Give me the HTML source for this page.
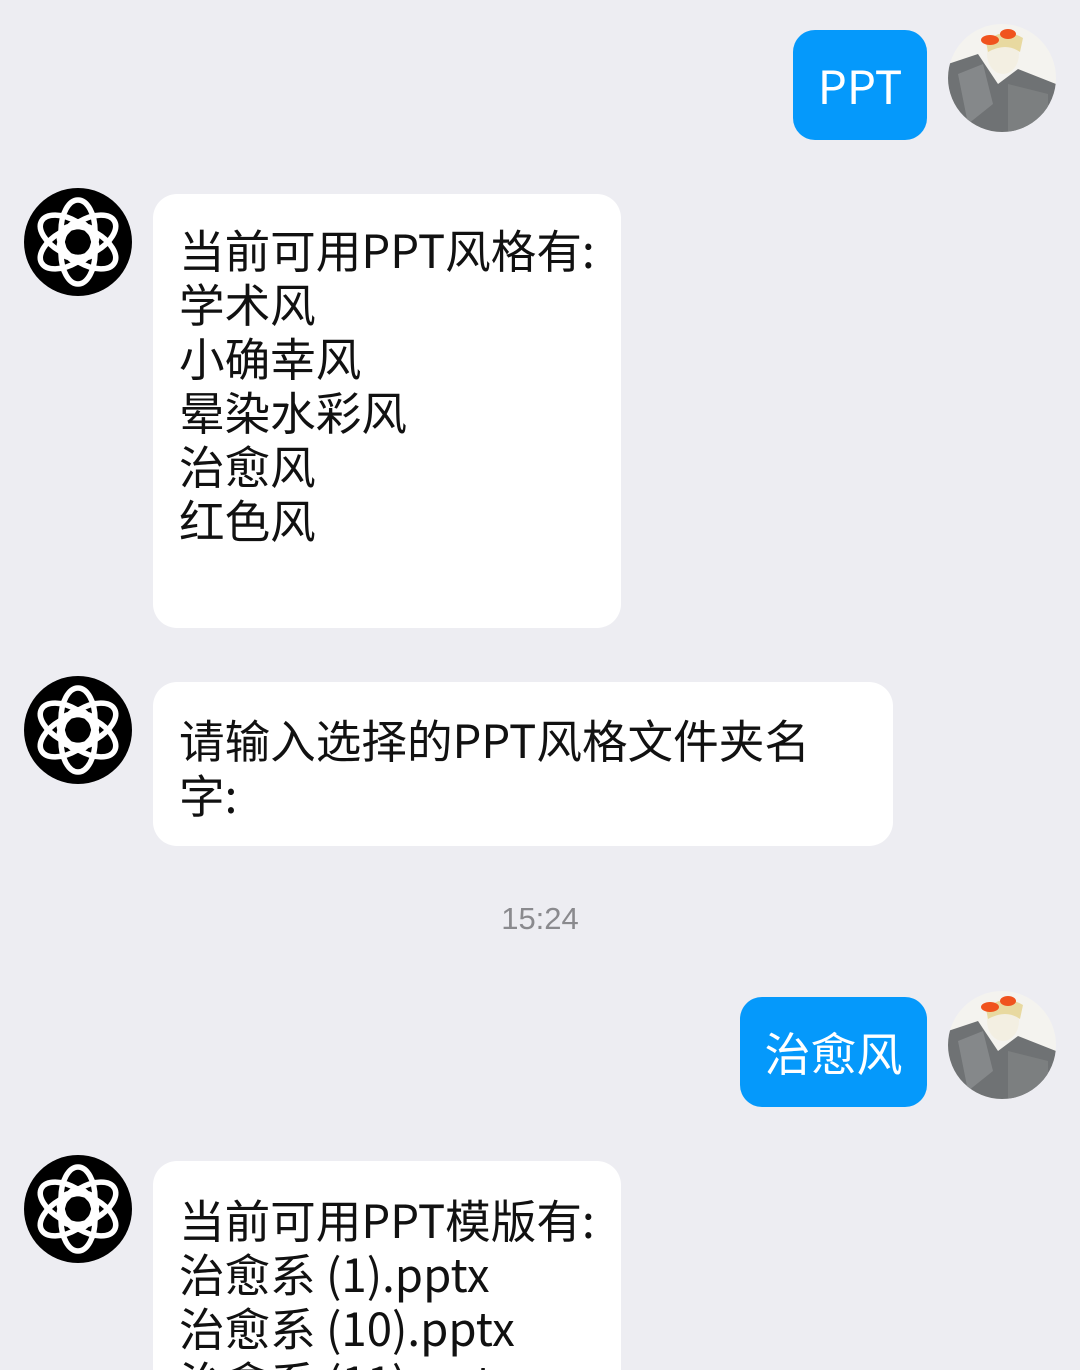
<!DOCTYPE html>
<html><head><meta charset="utf-8">
<style>
html,body{margin:0;padding:0;width:1080px;height:1370px;overflow:hidden;background:#ededf2;}
body{position:relative;font-family:"Liberation Sans","Noto Sans CJK SC",sans-serif;}
.b{position:absolute;background:#fff;border-radius:24px;box-sizing:border-box;color:#111;font-size:45.6px;line-height:54px;padding-left:26px;white-space:nowrap;font-family:"Noto Sans CJK SC","Liberation Sans",sans-serif;}
.u{position:absolute;background:#0599fb;border-radius:22px;color:#fff;font-size:46px;display:flex;align-items:center;justify-content:center;font-family:"Noto Sans CJK SC","Liberation Sans",sans-serif;}
.av{position:absolute;width:108px;height:108px;}
.ts{position:absolute;left:0;width:1080px;top:901px;text-align:center;color:#8a8a8e;font-size:31px;}
</style></head><body>
<svg width="0" height="0" style="position:absolute">
<defs>
<g id="logo">
<circle cx="54" cy="54" r="54" fill="#000"/>
<g fill="none" stroke="#fff" stroke-width="5.5" transform="translate(54,54)">
<ellipse cx="0" cy="-11" rx="17" ry="31" transform="rotate(0)"/>
<ellipse cx="0" cy="-11" rx="17" ry="31" transform="rotate(60)"/>
<ellipse cx="0" cy="-11" rx="17" ry="31" transform="rotate(120)"/>
<ellipse cx="0" cy="-11" rx="17" ry="31" transform="rotate(180)"/>
<ellipse cx="0" cy="-11" rx="17" ry="31" transform="rotate(240)"/>
<ellipse cx="0" cy="-11" rx="17" ry="31" transform="rotate(300)"/>
</g>
</g>
<clipPath id="cc"><circle cx="54" cy="54" r="54"/></clipPath>
<g id="user">
<g clip-path="url(#cc)">
<rect width="108" height="108" fill="#f4f3ef"/>
<path d="M0,40 L30,30 L50,60 L70,45 L108,60 L108,108 L0,108Z" fill="#6f7274"/>
<path d="M10,50 L35,40 L45,80 L20,100Z" fill="#85888a"/>
<path d="M60,60 L100,70 L100,108 L60,108Z" fill="#7c7f80"/>
<ellipse cx="55" cy="30" rx="16" ry="20" fill="#f3efe2"/>
<path d="M38,18 Q55,2 75,14 L72,28 Q58,18 40,28Z" fill="#e8d9a0"/>
<ellipse cx="42" cy="16" rx="9" ry="5" fill="#f0531e"/>
<ellipse cx="60" cy="10" rx="8" ry="5" fill="#f0531e"/>
</g>
</g>
</defs>
</svg>

<div class="u" style="left:793px;top:30px;width:134px;height:110px;">PPT</div>
<svg class="av" style="left:948px;top:24px" viewBox="0 0 108 108"><use href="#user"/></svg>

<svg class="av" style="left:24px;top:188px" viewBox="0 0 108 108"><use href="#logo"/></svg>
<div class="b" style="left:153px;top:194px;width:468px;height:434px;padding-top:28px;">当前可用PPT风格有:<br>学术风<br>小确幸风<br>晕染水彩风<br>治愈风<br>红色风</div>

<svg class="av" style="left:24px;top:676px" viewBox="0 0 108 108"><use href="#logo"/></svg>
<div class="b" style="left:153px;top:682px;width:740px;height:164px;padding-top:30px;line-height:55px;">请输入选择的PPT风格文件夹名<br>字:</div>

<div class="ts">15:24</div>

<div class="u" style="left:740px;top:997px;width:187px;height:110px;">治愈风</div>
<svg class="av" style="left:948px;top:991px" viewBox="0 0 108 108"><use href="#user"/></svg>

<svg class="av" style="left:24px;top:1155px" viewBox="0 0 108 108"><use href="#logo"/></svg>
<div class="b" style="left:153px;top:1161px;width:468px;height:260px;padding-top:31px;">当前可用PPT模版有:<br>治愈系 (1).pptx<br>治愈系 (10).pptx<br>治愈系 (11).pptx</div>
</body></html>
